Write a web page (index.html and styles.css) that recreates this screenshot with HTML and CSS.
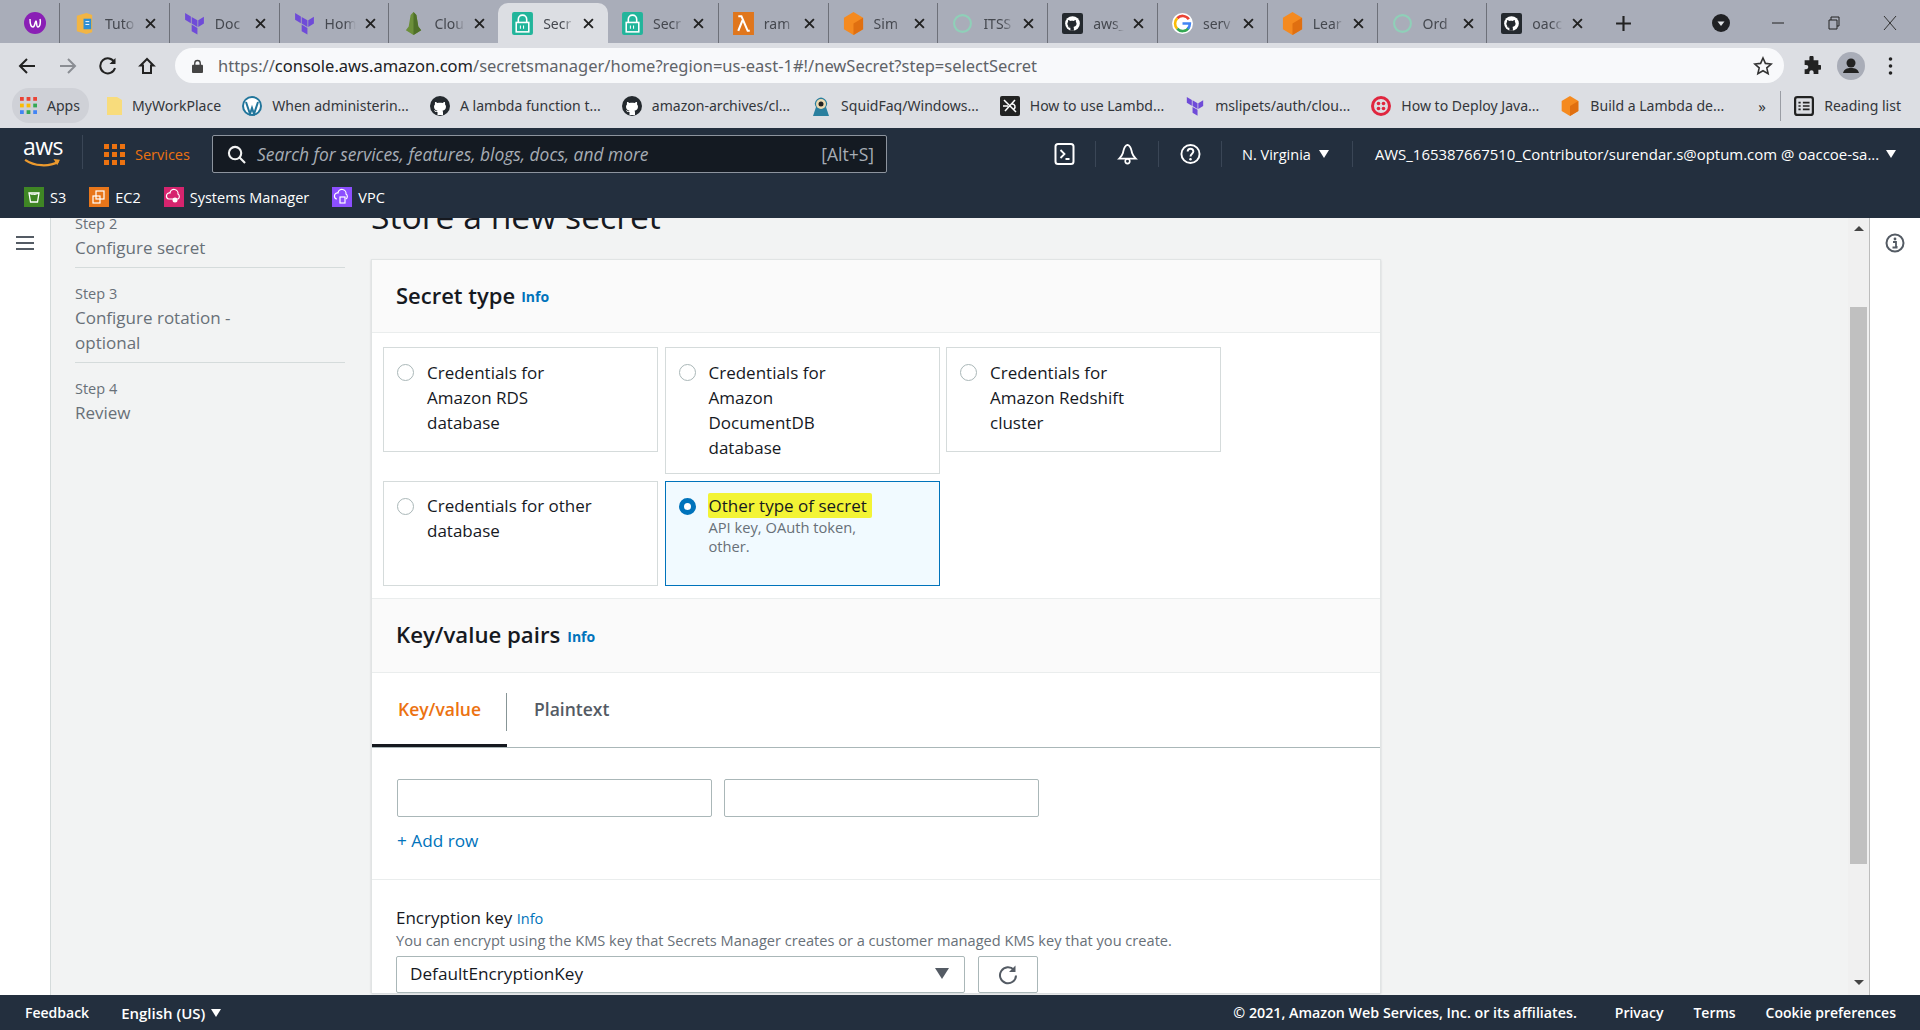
FILE: index.html
```html
<!DOCTYPE html>
<html lang="en">
<head>
<meta charset="utf-8">
<title>Secrets Manager</title>
<link rel="stylesheet" href="styles.css">
</head>
<body>
<svg class="defs" width="0" height="0">
  <symbol id="i-tf" viewBox="0 0 20 22"><path d="M1 1l5.500 3.300v6.400L1 7.400zM7.300 4.700l5.500 3.200v6.400l-5.500-3.200zM19 4.600l-5.400 3.300v6.400l5.400-3.300zM7.300 12l5.500 3.200v6.400l-5.500-3.200z" fill="#6f4bd8"/></symbol>
  <symbol id="i-secret" viewBox="0 0 20 22"><rect width="20" height="22" rx="2" fill="#22b59b"/><path d="M6 10V7a4 4 0 0 1 8 0v3" fill="none" stroke="#fff" stroke-width="1.500"/><rect x="4" y="10" width="12" height="9" fill="none" stroke="#fff" stroke-width="1.500"/><path d="M8 13v3M11 13v3" stroke="#fff"/></symbol>
  <symbol id="i-box" viewBox="0 0 20 24"><path d="M10 0l10 6v12l-10 6-10-6V6z" fill="#f58a1f"/><path d="M10 12l10-6v12l-10 6z" fill="#e06f10"/></symbol>
  <symbol id="i-gh" viewBox="0 0 20 20"><circle cx="10" cy="10" r="10" fill="#24292e"/><path d="M7.500 19v-3c-2.500.5-3-1-3.500-2 .8 0 1.500 1 2.300 1.300.4 0 .9-.1 1.200-.5-2-.4-3.500-1.600-3.500-4 0-1 .3-1.800 1-2.500-.2-.7-.2-1.500.1-2.300 1 0 1.700.5 2.400 1 1.500-.4 3.500-.4 5 0 .7-.5 1.400-1 2.400-1 .3.800.3 1.600.1 2.300.7.700 1 1.500 1 2.500 0 2.400-1.500 3.600-3.500 4 .4.500.5 1 .5 1.700V19z" fill="#fff"/></symbol>
  <symbol id="i-ghsq" viewBox="0 0 20 20"><rect width="20" height="20" rx="2" fill="#24292e"/><circle cx="10" cy="10" r="7" fill="#fff"/><path d="M8 17v-3c-1.500.3-2-.6-2.400-1.300h1c.5.700 1 .8 1.500.6-1.500-.3-3-1.300-3-3 0-.8.300-1.300.7-1.800-.1-.6-.1-1.200.1-1.800.8 0 1.300.4 1.800.8 1.100-.3 2.500-.3 3.600 0 .5-.4 1-.8 1.800-.8.200.6.200 1.200.1 1.800.4.500.7 1 .7 1.800 0 1.700-1.500 2.700-3 3 .3.300.4.700.4 1.200V17z" fill="#24292e"/></symbol>
  <symbol id="i-ring" viewBox="0 0 20 20"><circle cx="10" cy="10" r="8" fill="none" stroke="#8fd0b8" stroke-width="2"/></symbol>
  <symbol id="i-x" viewBox="0 0 10 10"><path d="M1 1l8 8M9 1l-8 8" stroke="#222" stroke-width="1.700" fill="none"/></symbol>
</svg>

<header class="chrome">
  <div class="tabstrip">
    <div class="tab tab-first">
      <svg class="fav" viewBox="0 0 22 22"><circle cx="11" cy="11" r="11" fill="#8a1fb5"/><path d="M6 7c0 4 1 8 3 8s2-6 3-6 0 6 2 6 3-5 2-8" fill="none" stroke="#fff" stroke-width="1.500"/></svg>
    </div>
    <div class="tab"><svg class="fav" viewBox="0 0 20 24"><path d="M2 4l10-3 6 2v18l-6 2-10-3z" fill="#f2b544"/><rect x="9" y="7" width="8" height="11" fill="#2d8fd5"/><path d="M11 10h4M11 13h4" stroke="#fff"/></svg><span class="tab-title">Tuto</span><svg class="tab-x"><use href="#i-x"/></svg></div>
    <div class="tab"><svg class="fav"><use href="#i-tf"/></svg><span class="tab-title">Doc</span><svg class="tab-x"><use href="#i-x"/></svg></div>
    <div class="tab"><svg class="fav"><use href="#i-tf"/></svg><span class="tab-title">Hom</span><svg class="tab-x"><use href="#i-x"/></svg></div>
    <div class="tab"><svg class="fav" viewBox="0 0 20 24"><path d="M10 0l3 3 2 12 3 4-8 5-8-5 3-4 2-12z" fill="#6c8f3a"/><path d="M10 0v24l8-5-3-4-2-12z" fill="#4f7028"/></svg><span class="tab-title">Clou</span><svg class="tab-x"><use href="#i-x"/></svg></div>
    <div class="tab tab-active"><svg class="fav"><use href="#i-secret"/></svg><span class="tab-title">Secr</span><svg class="tab-x"><use href="#i-x"/></svg></div>
    <div class="tab"><svg class="fav"><use href="#i-secret"/></svg><span class="tab-title">Secr</span><svg class="tab-x"><use href="#i-x"/></svg></div>
    <div class="tab"><svg class="fav" viewBox="0 0 20 22"><rect width="20" height="22" fill="#e0761c"/><path d="M5 4h3l6 14h2M9 8l-4 10" fill="none" stroke="#fff" stroke-width="2"/></svg><span class="tab-title">ram</span><svg class="tab-x"><use href="#i-x"/></svg></div>
    <div class="tab"><svg class="fav"><use href="#i-box"/></svg><span class="tab-title">Sim</span><svg class="tab-x"><use href="#i-x"/></svg></div>
    <div class="tab"><svg class="fav"><use href="#i-ring"/></svg><span class="tab-title">ITSS</span><svg class="tab-x"><use href="#i-x"/></svg></div>
    <div class="tab"><svg class="fav"><use href="#i-ghsq"/></svg><span class="tab-title">aws_</span><svg class="tab-x"><use href="#i-x"/></svg></div>
    <div class="tab"><svg class="fav" viewBox="0 0 20 20"><circle cx="10" cy="10" r="10" fill="#fff"/><path d="M16 6a7 7 0 0 0-11-1" fill="none" stroke="#ea4335" stroke-width="2.500"/><path d="M5 5a7 7 0 0 0 0 10" fill="none" stroke="#fbbc05" stroke-width="2.500"/><path d="M5 15a7 7 0 0 0 11-1" fill="none" stroke="#34a853" stroke-width="2.500"/><path d="M10 10h7a7 7 0 0 1-2 5" fill="none" stroke="#4285f4" stroke-width="2.500"/></svg><span class="tab-title">serv</span><svg class="tab-x"><use href="#i-x"/></svg></div>
    <div class="tab"><svg class="fav"><use href="#i-box"/></svg><span class="tab-title">Lear</span><svg class="tab-x"><use href="#i-x"/></svg></div>
    <div class="tab"><svg class="fav"><use href="#i-ring"/></svg><span class="tab-title">Ord</span><svg class="tab-x"><use href="#i-x"/></svg></div>
    <div class="tab"><svg class="fav"><use href="#i-ghsq"/></svg><span class="tab-title">oacc</span><svg class="tab-x"><use href="#i-x"/></svg></div>
    <svg class="tab-plus" viewBox="0 0 16 16"><path d="M8 1v14M1 8h14" stroke="#222" stroke-width="2"/></svg>
    <svg class="tab-search" viewBox="0 0 18 18"><circle cx="9" cy="9" r="9" fill="#202124"/><path d="M5.500 7.500h7L9 12z" fill="#dfe1e5"/></svg>
    <div class="win-btns">
      <svg class="win-btn" viewBox="0 0 14 14"><path d="M1 7h12" stroke="#222"/></svg>
      <svg class="win-btn" viewBox="0 0 14 14"><path d="M2 4h8v9H2zM4 4V1h8v9h-2" fill="none" stroke="#222"/></svg>
      <svg class="win-btn" viewBox="0 0 14 14"><path d="M1 0l12 14M13 0L1 14" stroke="#333"/></svg>
    </div>
  </div>

  <div class="toolbar">
    <svg class="tool" viewBox="0 0 18 18"><path d="M17 9H2M9 2L2 9l7 7" fill="none" stroke="#222" stroke-width="2"/></svg>
    <svg class="tool" viewBox="0 0 18 18"><path d="M1 9h15M9 2l7 7-7 7" fill="none" stroke="#8a8d93" stroke-width="2"/></svg>
    <svg class="tool" viewBox="0 0 18 18"><path d="M15.500 5.500A7.500 7.500 0 1 0 16 11" fill="none" stroke="#222" stroke-width="2"/><path d="M16.500 1v6h-6z" fill="#222"/></svg>
    <svg class="tool" viewBox="0 0 18 18"><path d="M9 2L2.500 8.500H5V16h8V8.500h2.500z" fill="none" stroke="#222" stroke-width="2"/></svg>
    <div class="omnibox">
      <svg class="lock" viewBox="0 0 12 15"><path d="M3 7V4.500a3 3 0 0 1 6 0V7" fill="none" stroke="#444" stroke-width="1.500"/><rect y="6" width="12" height="9" rx="1" fill="#444"/></svg>
      <span class="url"><span class="url-dim">https://</span>console.aws.amazon.com<span class="url-dim">/secretsmanager/home?region=us-east-1#!/newSecret?step=selectSecret</span></span>
      <svg class="star" viewBox="0 0 20 20"><path d="M10 2l2.400 5.400 5.800.6-4.400 3.900 1.300 5.800L10 14.700l-5.100 3 1.300-5.800L1.800 8l5.800-.6z" fill="none" stroke="#333" stroke-width="1.600"/></svg>
    </div>
    <svg class="ext" viewBox="0 0 18 18"><path d="M7 1.500a2 2 0 0 1 4 0V4h4.500v4.500h1.500a2.200 2.200 0 0 1 0 4.500h-1.500v4H11v-1.500a2 2 0 0 0-4 0V17H2.500v-4.500H4a2 2 0 0 0 0-4H2.500V4H7z" fill="#222"/></svg>
    <svg class="avatar" viewBox="0 0 28 28"><circle cx="14" cy="14" r="14" fill="#a9adb8"/><circle cx="14" cy="11" r="4.500" fill="#222"/><path d="M6 21c1-4 4-5 8-5s7 1 8 5z" fill="#222"/></svg>
    <svg class="dots" viewBox="0 0 4 18"><circle cx="2" cy="2" r="1.800" fill="#222"/><circle cx="2" cy="9" r="1.800" fill="#222"/><circle cx="2" cy="16" r="1.800" fill="#222"/></svg>
  </div>

  <div class="bookmarks">
    <div class="bm bm-apps"><svg class="bm-ic" viewBox="0 0 18 18"><g fill="#ea4335"><rect width="4" height="4"/><rect x="7" width="4" height="4"/><rect x="14" width="4" height="4"/></g><g fill="#fbbc05"><rect y="7" width="4" height="4"/><rect x="7" y="7" width="4" height="4"/></g><rect x="14" y="7" width="4" height="4" fill="#34a853"/><g fill="#4285f4"><rect y="14" width="4" height="4"/></g><g fill="#34a853"><rect x="7" y="14" width="4" height="4"/></g><rect x="14" y="14" width="4" height="4" fill="#4285f4"/></svg><span>Apps</span></div>
    <div class="bm"><svg class="bm-ic bm-folder" viewBox="0 0 15 20"><path d="M0 1h10l5 3v15H0z" fill="#f8dc7c"/></svg><span>MyWorkPlace</span></div>
    <div class="bm"><svg class="bm-ic" viewBox="0 0 20 20"><circle cx="10" cy="10" r="10" fill="#21759b"/><circle cx="10" cy="10" r="8" fill="#fff"/><path d="M4 6l4 12 2-6 2 6 4-12" fill="none" stroke="#21759b" stroke-width="2"/></svg><span>When administerin...</span></div>
    <div class="bm"><svg class="bm-ic"><use href="#i-gh"/></svg><span>A lambda function t...</span></div>
    <div class="bm"><svg class="bm-ic"><use href="#i-gh"/></svg><span>amazon-archives/cl...</span></div>
    <div class="bm"><svg class="bm-ic" viewBox="0 0 20 20"><path d="M2 20l3-9a6 6 0 1 1 10 0l3 9z" fill="#2a7f9e"/><circle cx="10" cy="8" r="5" fill="#ecd9b0"/><circle cx="10" cy="8" r="2.500" fill="#222"/></svg><span>SquidFaq/Windows...</span></div>
    <div class="bm"><svg class="bm-ic" viewBox="0 0 20 20"><rect width="20" height="20" rx="2" fill="#222"/><path d="M4 4l12 12M15 4L5 15M3 10h5M12 8c3 0 4 3 2 5" fill="none" stroke="#fff" stroke-width="1.500"/></svg><span>How to use Lambd...</span></div>
    <div class="bm"><svg class="bm-ic"><use href="#i-tf"/></svg><span>mslipets/auth/clou...</span></div>
    <div class="bm"><svg class="bm-ic" viewBox="0 0 20 20"><circle cx="10" cy="10" r="8.500" fill="none" stroke="#e0263f" stroke-width="3"/><g fill="#e0263f"><circle cx="7.500" cy="7.500" r="1.800"/><circle cx="12.500" cy="7.500" r="1.800"/><circle cx="7.500" cy="12.500" r="1.800"/><circle cx="12.500" cy="12.500" r="1.800"/></g></svg><span>How to Deploy Java...</span></div>
    <div class="bm"><svg class="bm-ic"><use href="#i-box"/></svg><span>Build a Lambda de...</span></div>
    <span class="bm-more">»</span>
    <div class="bm bm-reading"><svg class="bm-ic" viewBox="0 0 18 18"><rect x="1" y="1" width="16" height="16" rx="2" fill="none" stroke="#222" stroke-width="2"/><path d="M4 6h2M8 6h6M4 9h2M8 9h6M4 12h2M8 12h6" stroke="#222" stroke-width="1.500"/></svg><span>Reading list</span></div>
  </div>
</header>

<nav class="awsnav">
  <div class="nav-top">
    <div class="aws-logo">
      <span class="aws-word">aws</span>
      <svg class="aws-smile" viewBox="0 0 40 12"><path d="M1 2c10 7 26 8 36 2" fill="none" stroke="#ec9a2e" stroke-width="2.500"/><path d="M32 1l7 1-3 6z" fill="#ec9a2e"/></svg>
    </div>
    <div class="services">
      <svg class="grid-ic" viewBox="0 0 21 21"><g fill="#ec7211"><rect width="5" height="5"/><rect x="8" width="5" height="5"/><rect x="16" width="5" height="5"/><rect y="8" width="5" height="5"/><rect x="8" y="8" width="5" height="5"/><rect x="16" y="8" width="5" height="5"/><rect y="16" width="5" height="5"/><rect x="8" y="16" width="5" height="5"/><rect x="16" y="16" width="5" height="5"/></g></svg>
      <span>Services</span>
    </div>
    <div class="search">
      <svg class="search-ic" viewBox="0 0 20 20"><circle cx="8.500" cy="8.500" r="6.500" fill="none" stroke="#f2f3f3" stroke-width="2.200"/><path d="M13 13l6 6" stroke="#f2f3f3" stroke-width="2.200"/></svg>
      <span class="search-text">Search for services, features, blogs, docs, and more</span>
      <span class="search-key">[Alt+S]</span>
    </div>
    <div class="nav-right">
      <div class="nav-ic"><svg viewBox="0 0 20 22" class="nav-svg"><rect x="1" y="1" width="18" height="20" rx="2.500" fill="none" stroke="#fff" stroke-width="2"/><path d="M6 7l4 4-4 4M11 16h4" fill="none" stroke="#fff" stroke-width="1.800"/></svg></div>
      <div class="nav-ic"><svg viewBox="0 0 22 24" class="nav-svg"><path d="M11 2c-4 1-4 5-5 9-.5 2-2 4-4 6h18c-2-2-3.500-4-4-6-1-4-1-8-5-9z" fill="none" stroke="#fff" stroke-width="2"/><circle cx="11" cy="20" r="2.500" fill="none" stroke="#fff" stroke-width="1.800"/></svg></div>
      <div class="nav-ic"><svg viewBox="0 0 22 22" class="nav-svg"><circle cx="11" cy="11" r="9.500" fill="none" stroke="#fff" stroke-width="2"/><path d="M8 8.500c0-4 6-4 6 0 0 2-3 2.500-3 5" fill="none" stroke="#fff" stroke-width="2"/><circle cx="11" cy="16.500" r="1.300" fill="#fff"/></svg></div>
      <div class="nav-region">N. Virginia<i class="tri"></i></div>
      <div class="nav-account">AWS_165387667510_Contributor/surendar.s@optum.com @ oaccoe-sa...<i class="tri"></i></div>
    </div>
  </div>
  <div class="nav-shortcuts">
    <div class="short"><svg class="short-ic" viewBox="0 0 20 20"><rect width="20" height="20" fill="#3f8624"/><path d="M5 6h10l-1.500 9h-7z" fill="none" stroke="#fff" stroke-width="1.300"/><path d="M5 6c2 2 7 2 10 0" fill="none" stroke="#fff"/></svg><span>S3</span></div>
    <div class="short"><svg class="short-ic" viewBox="0 0 20 20"><rect width="20" height="20" fill="#e8761a"/><rect x="7" y="4" width="8" height="8" fill="none" stroke="#fff" stroke-width="1.200"/><rect x="4" y="9" width="7" height="7" fill="none" stroke="#fff" stroke-width="1.200"/></svg><span>EC2</span></div>
    <div class="short"><svg class="short-ic" viewBox="0 0 20 20"><rect width="20" height="20" fill="#d6246e"/><path d="M5 12a3 3 0 0 1 1-6 4 4 0 0 1 8 1 3 3 0 0 1 0 5z" fill="none" stroke="#fff" stroke-width="1.200"/><circle cx="11" cy="13" r="2.500" fill="#fff"/></svg><span>Systems Manager</span></div>
    <div class="short"><svg class="short-ic" viewBox="0 0 20 20"><rect width="20" height="20" fill="#8c4fff"/><path d="M5 12a3 3 0 0 1 1-6 4 4 0 0 1 8 1 3 3 0 0 1 0 5" fill="none" stroke="#fff" stroke-width="1.200"/><rect x="8" y="10" width="5" height="6" fill="none" stroke="#fff" stroke-width="1.200"/></svg><span>VPC</span></div>
  </div>
</nav>

<main class="main">
  <aside class="rail">
    <svg class="hamburger" viewBox="0 0 18 14"><path d="M0 1h18M0 7h18M0 13h18" stroke="#545b64" stroke-width="2"/></svg>
  </aside>
  <div class="viewport">
    <div class="steps">
      <div class="step step-first"><div class="step-no">Step 2</div><div class="step-name">Configure secret</div></div>
      <div class="step"><div class="step-no">Step 3</div><div class="step-name">Configure rotation -<br>optional</div></div>
      <div class="step step-last"><div class="step-no">Step 4</div><div class="step-name">Review</div></div>
    </div>
    <div class="form">
      <h1 class="page-title">Store a new secret</h1>
      <section class="panel">
        <div class="panel-head"><h2>Secret type</h2><a class="info">Info</a></div>
        <div class="cards">
          <label class="card"><i class="radio"></i><div class="card-text">Credentials for<br>Amazon RDS<br>database</div></label>
          <label class="card"><i class="radio"></i><div class="card-text">Credentials for<br>Amazon<br>DocumentDB<br>database</div></label>
          <label class="card"><i class="radio"></i><div class="card-text">Credentials for<br>Amazon Redshift<br>cluster</div></label>
          <label class="card card-low"><i class="radio"></i><div class="card-text">Credentials for other<br>database</div></label>
          <label class="card card-low card-on"><i class="radio radio-on"></i><div class="card-text"><mark class="hl">Other type of secret</mark><div class="card-sub">API key, OAuth token,<br>other.</div></div></label>
        </div>
        <div class="panel-head panel-head-mid"><h2>Key/value pairs</h2><a class="info">Info</a></div>
        <div class="tabs">
          <div class="pill pill-on">Key/value</div>
          <div class="pill">Plaintext</div>
        </div>
        <div class="kv">
          <div class="kv-row"><div class="input"></div><div class="input"></div></div>
          <a class="add-row">+ Add row</a>
        </div>
        <div class="enc">
          <div class="enc-label">Encryption key <a class="info info-light">Info</a></div>
          <div class="enc-desc">You can encrypt using the KMS key that Secrets Manager creates or a customer managed KMS key that you create.</div>
          <div class="enc-row">
            <div class="select"><span>DefaultEncryptionKey</span><i class="select-tri"></i></div>
            <div class="refresh"><svg viewBox="0 0 20 20" class="refresh-ic"><path d="M16 5.500A8 8 0 1 0 18 11" fill="none" stroke="#545b64" stroke-width="2"/><path d="M17.500 1v6.500H11z" fill="#545b64"/></svg></div>
          </div>
        </div>
      </section>
    </div>
  </div>
  <div class="scrollbar">
    <i class="sb-up"></i>
    <div class="sb-thumb"></div>
    <i class="sb-down"></i>
  </div>
  <aside class="tools">
    <svg class="tools-ic" viewBox="0 0 20 20"><circle cx="10" cy="10" r="8.500" fill="none" stroke="#545b64" stroke-width="2"/><circle cx="10" cy="6" r="1.400" fill="#545b64"/><path d="M8 9h3v5h1.500M7.500 14.500h5" fill="none" stroke="#545b64" stroke-width="1.800"/></svg>
  </aside>
</main>

<footer class="foot">
  <span class="foot-fb">Feedback</span>
  <span class="foot-lang">English (US)<i class="tri"></i></span>
  <span class="foot-copy">© 2021, Amazon Web Services, Inc. or its affiliates.</span>
  <span class="foot-link">Privacy</span>
  <span class="foot-link">Terms</span>
  <span class="foot-link">Cookie preferences</span>
</footer>
</body>
</html>
```
FILE: styles.css
```css
* { box-sizing: border-box; }
html, body { margin: 0; height: 1030px; overflow: hidden; }
body { font-family: "Open Sans", "Noto Sans", sans-serif; display: flex; flex-direction: column; background: #f2f3f3; color: #16191f; }
.defs { position: absolute; }
i { display: block; font-style: normal; }
a { color: #0073bb; }

/* browser chrome */
.chrome { flex: none; height: 128px; background: #dcdee3; font-family: "Noto Sans", sans-serif; color: #33363b; }
.tabstrip { height: 43px; background: #a9adb9; display: flex; align-items: center; padding-top: 3px; }
.tab { flex: none; width: 109.800px; height: 40px; display: flex; align-items: center; padding-left: 14px; font-size: 14px; border-left: 1px solid #6d7079; background-clip: padding-box; }
.tab-first { width: 59px; border-left: 0; padding-left: 24px; }
.tab-active { background: #dcdee3; border-radius: 10px 10px 0 0; border-left: 0; }
.tab-active + .tab { border-left: 0; }
.fav { flex: none; width: 21px; height: 23px; margin-right: 10px; }
.tab-first .fav { width: 22px; height: 22px; margin: 0; }
.tab-title { width: 31px; overflow: hidden; white-space: nowrap; color: #45484f; flex: none; -webkit-mask-image: linear-gradient(to right, #000 65%, transparent); mask-image: linear-gradient(to right, #000 65%, transparent); }
.tab-x { flex: none; width: 11px; height: 11px; margin-left: 9px; }
.tab-plus { flex: none; width: 17px; height: 17px; margin-left: 19px; }
.tab-search { flex: none; width: 18px; height: 18px; margin-left: 80px; }
.win-btns { flex: none; display: flex; gap: 42px; margin-left: 41px; }
.win-btn { width: 14px; height: 14px; }

.toolbar { height: 45px; display: flex; align-items: center; padding-left: 18px; }
.tool { flex: none; width: 18px; height: 18px; margin-right: 23px; }
.tool:nth-child(2) { margin-right: 22px; }
.tool:nth-child(3) { margin-right: 21px; }
.tool:nth-child(4) { margin-right: 19px; }
.omnibox { flex: none; width: 1609px; height: 35px; border-radius: 18px; background: #f8f9fb; display: flex; align-items: center; padding-left: 17px; font-size: 16.500px; }
.lock { flex: none; width: 11px; height: 14px; margin-right: 15px; }
.url { color: #202124; white-space: nowrap; }
.url-dim { color: #5f6368; }
.star { flex: none; width: 20px; height: 20px; margin-left: auto; margin-right: 11px; }
.ext { flex: none; width: 19px; height: 19px; margin-left: 18px; }
.avatar { flex: none; width: 28px; height: 28px; margin-left: 16px; }
.dots { flex: none; width: 5px; height: 18px; margin-left: 23px; }

.bookmarks { height: 35px; display: flex; align-items: center; padding: 0 19px 5px 12px; font-size: 14.050px; color: #33363b; border-bottom: 1px solid #6d7079; box-sizing: content-box; margin-bottom: -1px; }
.bm { flex: none; display: flex; align-items: center; gap: 10px; margin-right: 21px; white-space: nowrap; }
.bm-apps { height: 35px; width: 77px; padding-left: 8px; border-radius: 17px; background: #cfd1d7; margin-right: 18px; }
.bm-ic { flex: none; width: 20px; height: 20px; }
.bm-apps .bm-ic { width: 17px; height: 17px; }
.bm-folder { width: 15px; }
.bm-more { flex: none; margin-left: auto; width: 23px; font-size: 15px; border-right: 1px solid #9a9da4; line-height: 30px; }
.bm-reading { margin: 0 0 0 13px; }

/* aws nav */
.awsnav { flex: none; height: 90px; background: #232f3e; color: #fff; font-size: 14px; display: flex; flex-direction: column; }
.nav-top { height: 52px; display: flex; align-items: center; padding-left: 23px; }
.aws-logo { flex: none; width: 60px; height: 34px; border-right: 1px solid #3a4656; margin-top: -4px; }
.aws-word { display: block; font-size: 23px; line-height: 22px; letter-spacing: -.5px; }
.aws-smile { display: block; width: 39px; height: 11px; margin-top: 1px; }
.services { flex: none; display: flex; align-items: center; gap: 10px; margin-left: 21px; width: 108px; color: #ec7211; font-size: 14.500px; }
.grid-ic { flex: none; width: 21px; height: 21px; }
.search { flex: none; width: 675px; height: 38px; display: flex; align-items: center; padding: 0 12px 0 14px; background: #141a22; border: 1px solid #8d949e; border-radius: 2px; }
.search-ic { flex: none; width: 19px; height: 19px; margin-right: 11px; }
.search-text { color: #a7adb5; font-style: italic; font-size: 17.400px; white-space: nowrap; }
.search-key { color: #a7adb5; font-size: 17.500px; margin-left: auto; }
.nav-right { flex: 1; display: flex; align-items: center; min-width: 0; padding-left: 146px; white-space: nowrap; }
.nav-ic { flex: none; width: 63px; height: 26px; display: flex; justify-content: center; align-items: center; border-right: 1px solid #3a4656; }
.nav-svg { width: 21px; height: 22px; }
.nav-region { flex: none; display: flex; align-items: center; gap: 8px; padding: 0 23px 0 20px; height: 26px; border-right: 1px solid #3a4656; font-size: 14.500px; }
.nav-account { flex: none; display: flex; align-items: center; gap: 7px; padding-left: 22px; font-size: 14.950px; }
.tri { flex: none; width: 0; height: 0; border-left: 5px solid transparent; border-right: 5px solid transparent; border-top: 8px solid currentColor; }
.nav-shortcuts { flex: 1; display: flex; align-items: center; padding-left: 24px; padding-bottom: 4px; }
.short { display: flex; align-items: center; gap: 6px; margin-right: 23px; font-size: 14.500px; }
.short-ic { width: 20px; height: 20px; flex: none; }

/* main */
.main { flex: none; height: 777px; display: flex; overflow: hidden; }
.rail { flex: none; width: 51px; background: #fff; border-right: 1px solid #d5dbdb; }
.hamburger { display: block; width: 18px; height: 14px; margin: 18px 0 0 16px; }
.viewport { flex: 1; min-width: 0; display: flex; overflow: hidden; background: #f2f3f3; }
.steps { flex: none; width: 320px; padding-left: 24px; color: #687078; }
.step { width: 270px; padding: 15px 0 7px; border-bottom: 1px solid #d5dbdb; }
.step-first { margin-top: -5px; padding-top: 0; }
.step-last { border: 0; }
.step-no { font-size: 14.500px; line-height: 22px; }
.step-name { font-size: 17px; line-height: 25px; }

.form { flex: none; width: 1010px; margin-top: -24px; }
.page-title { margin: 0 0 21px; font-size: 33.700px; line-height: 44px; font-weight: 400; white-space: nowrap; }
.panel { background: #fff; border: 1px solid #e1e4e4; border-bottom: 0; box-shadow: 0 1px 2px rgba(0, 21, 41, .15); }
.panel-head { height: 73px; display: flex; align-items: center; gap: 6px; padding: 0 0 3px 24px; background: #fafafa; border-bottom: 1px solid #eaeded; }
.panel-head h2 { margin: 0; font-size: 22px; font-weight: 600; }
.panel-head-mid h2 { font-size: 22.200px; }
.info { font-size: 14px; font-weight: 700; padding-top: 4px; }
.panel-head-mid { height: 74px; gap: 7px; }
.cards { display: grid; grid-template-columns: repeat(3, 275px); grid-auto-rows: auto; gap: 7px 6.500px; align-items: start; padding: 14px 0 12px 11px; border-bottom: 1px solid #eaeded; }
.card { display: flex; gap: 13px; height: 105px; padding: 12px 13px; background: #fff; border: 1px solid #d5dbdb; font-size: 17px; line-height: 25px; }
.card:nth-child(2) { height: 127px; }
.card-low { padding-top: 11px; }
.card-on { background: #f1faff; border-color: #0073bb; }
.radio { flex: none; width: 17px; height: 17px; margin-top: 4px; border-radius: 50%; border: 1px solid #aab7b8; background: #fff; }
.card-low .radio { margin-top: 5px; }
.radio-on { border: 5px solid #0073bb; }
.card-text { white-space: nowrap; }
.hl { display: inline-block; margin-left: -1px; padding: 0 5px 0 1px; background: #f3f435; color: #16191f; border-radius: 2px; }
.card-sub { font-size: 14.700px; line-height: 19px; color: #687078; }
.tabs { height: 75px; display: flex; align-items: center; border-bottom: 1px solid #aab7b8; font-size: 17.500px; font-weight: 600; color: #545b64; }
.pill { height: 38px; display: flex; align-items: center; padding: 0 27px 2px; }
.pill-on { width: 135px; height: 100%; color: #ec7211; position: relative; border-bottom: 3px solid #16191f; justify-content: center; padding: 0; }
.pill-on::after { content: ""; position: absolute; right: 0; top: 20px; height: 38px; border-right: 1px solid #879596; }
.kv { height: 132px; padding: 31px 0 0 25px; border-bottom: 1px solid #eaeded; }
.kv-row { display: flex; gap: 12px; }
.input { width: 315px; height: 38px; background: #fff; border: 1px solid #aab7b8; border-radius: 2px; }
.add-row { display: block; margin-top: 11px; font-size: 17.200px; line-height: 25px; }
.enc { padding: 25px 0 0 24px; }
.enc-label { font-size: 17px; line-height: 25px; white-space: nowrap; }
.info-light { font-weight: 400; font-size: 14.500px; padding: 0; }
.enc-desc { font-size: 14.600px; line-height: 18px; color: #687078; white-space: nowrap; margin-bottom: 7px; }
.enc-row { display: flex; gap: 13px; }
.select { width: 569px; height: 37px; display: flex; align-items: center; justify-content: space-between; padding: 0 15px 3px 13px; background: #fff; border: 1px solid #aab7b8; border-radius: 2px; font-size: 17.200px; }
.select-tri { width: 0; height: 0; border-left: 7px solid transparent; border-right: 7px solid transparent; border-top: 11px solid #545b64; }
.refresh { width: 60px; height: 37px; display: flex; align-items: center; justify-content: center; background: #fff; border: 1px solid #aab7b8; border-radius: 2px; }
.refresh-ic { width: 20px; height: 21px; }

.scrollbar { flex: none; width: 22px; background: #f0f0f0; border-right: 1px solid #bdbdbd; display: flex; flex-direction: column; align-items: center; padding-top: 8px; }
.sb-up { width: 0; height: 0; border-left: 5px solid transparent; border-right: 5px solid transparent; border-bottom: 5px solid #444; }
.sb-thumb { width: 17px; height: 557px; margin-top: 76px; background: #c0c0c0; }
.sb-down { width: 0; height: 0; margin-top: 116px; border-left: 5px solid transparent; border-right: 5px solid transparent; border-top: 5px solid #444; }
.tools { flex: none; width: 50px; background: #fff; }
.tools-ic { display: block; width: 20px; height: 20px; margin: 15px 0 0 15px; }

/* footer */
.foot { flex: none; height: 35px; display: flex; align-items: center; padding-left: 25px; background: #232f3e; color: #fff; font-size: 14px; font-weight: 600; white-space: nowrap; }
.foot-lang { display: flex; align-items: center; gap: 6px; margin-left: 32px; font-size: 15px; }
.foot-copy { margin-left: auto; margin-right: 38px; font-size: 14.250px; }
.foot-link { margin-right: 30px; }
.foot-link:last-child { margin-right: 24px; }
```
